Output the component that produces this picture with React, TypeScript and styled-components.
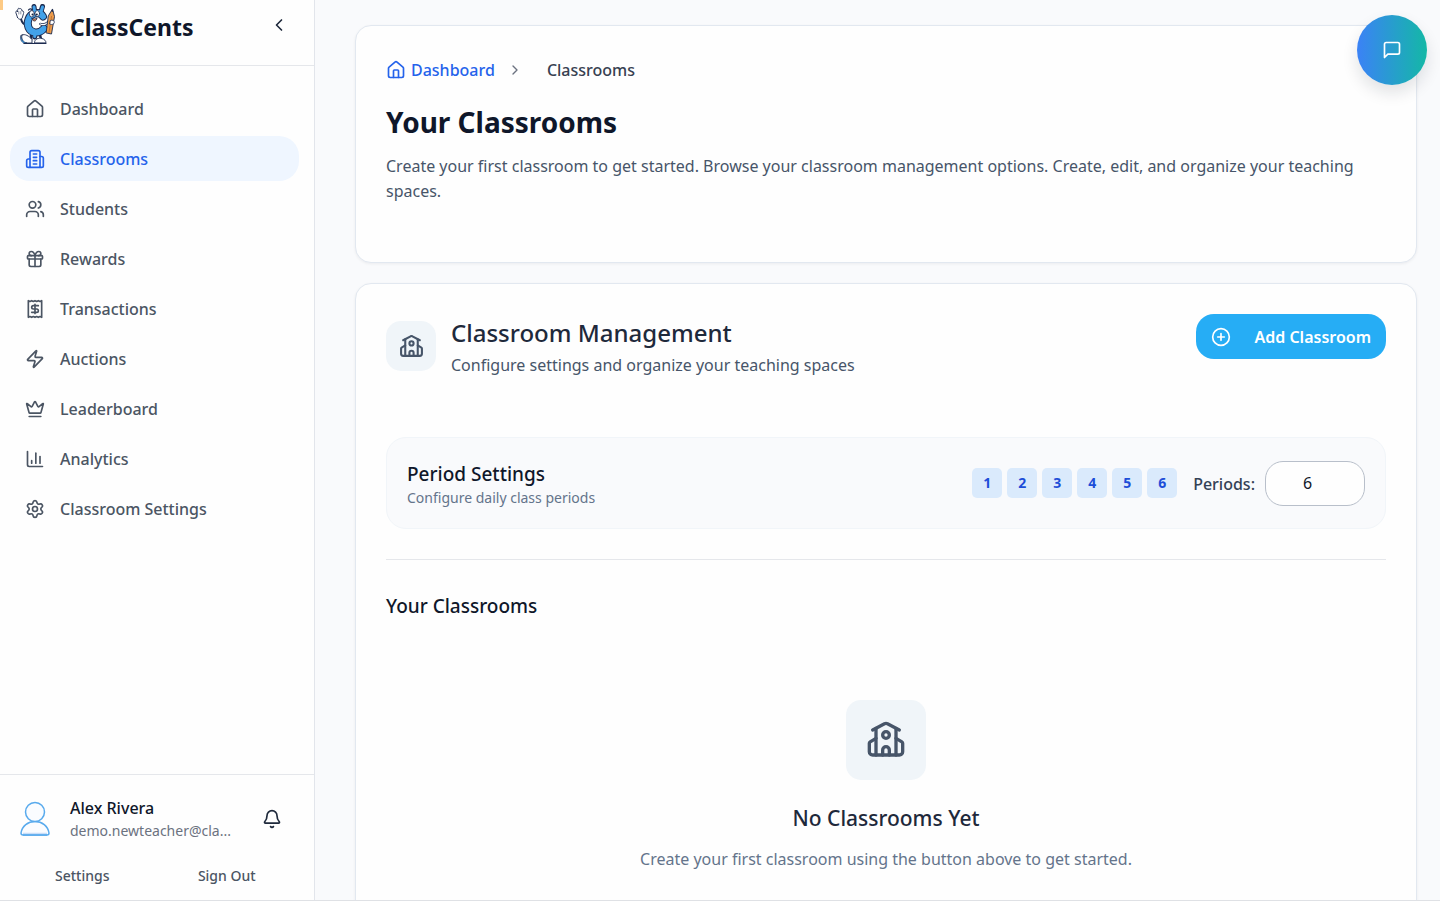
import React from "react";
import styled, { createGlobalStyle, css } from "styled-components";
import {
  Bell,
  ChartColumn,
  ChevronLeft,
  ChevronRight,
  CirclePlus,
  Crown,
  Gift,
  House,
  Receipt,
  School,
  Settings,
  Users,
  Zap,
} from "lucide-react";

const GlobalStyle = createGlobalStyle`
  *, *::before, *::after { box-sizing: border-box; }
  body {
    margin: 0;
    background: #f9fafc;
    color: #0f172a;
    font-family: "Noto Sans", "Open Sans", sans-serif;
    font-size: 16px;
    line-height: 25px;
  }
  h1, h2, h3, p, ul, ol { margin: 0; padding: 0; }
  ul, ol { list-style: none; }
  button, input { font: inherit; }
  a { text-decoration: none; }
`;

const Shell = styled.div`
  position: relative;
  display: flex;
  height: 100vh;
  overflow: hidden;
  border-bottom: 1px solid #dfe1e5;
`;

const FocusMark = styled.span`
  position: absolute;
  top: 0;
  left: 0;
  width: 3px;
  height: 10px;
  background: #fdca85;
`;

const Sidebar = styled.aside`
  display: flex;
  flex-direction: column;
  flex: 0 0 315px;
  min-width: 0;
  background: #fefefe;
  border-right: 1px solid #e2e5eb;
`;

const Brand = styled.header`
  display: flex;
  align-items: flex-start;
  height: 66px;
  padding: 4px 20px 0 15px;
  border-bottom: 1px solid #e5e7eb;
`;

const BrandName = styled.span`
  flex: 1;
  margin-left: 15px;
  font-size: 23px;
  line-height: 46px;
  font-weight: 700;
`;

const IconButton = styled.button`
  display: flex;
  align-items: center;
  justify-content: center;
  width: 30px;
  height: 42px;
  padding: 0;
  border: 0;
  background: none;
  color: #1e293b;
`;

const Nav = styled.nav`
  flex: 1;
  padding: 20px 15px 0 10px;
`;

const NavList = styled.ul`
  display: flex;
  flex-direction: column;
  gap: 5px;
`;

const NavLink = styled.a<{ $active?: boolean }>`
  display: flex;
  align-items: center;
  gap: 15px;
  height: 45px;
  padding: 0 15px;
  border-radius: 20px;
  font-weight: 500;
  color: #4b5563;
  ${(p) =>
    p.$active &&
    css`
      background: #eff6ff;
      color: #2563eb;
    `}
`;

const Label = styled.span`
  padding-top: 2px;
`;

const Account = styled.footer`
  border-top: 1px solid #e5e7eb;
  padding: 21px 15px 5px 10px;
`;

const AccountRow = styled.div`
  display: flex;
  align-items: center;
  gap: 20px;
  padding: 0 12px 0 10px;
`;

const AccountText = styled.div`
  flex: 1;
  min-width: 0;
`;

const AccountName = styled.p`
  font-size: 16px;
  line-height: 25px;
  font-weight: 500;
`;

const AccountMail = styled.p`
  font-size: 14px;
  line-height: 20px;
  color: #6b7280;
  white-space: nowrap;
`;

const AccountActions = styled.div`
  display: grid;
  grid-template-columns: 1fr 1fr;
  margin-top: 14px;
`;

const TextButton = styled.button`
  height: 40px;
  padding: 0;
  border: 0;
  background: none;
  color: #4b5563;
  font-size: 14px;
  font-weight: 500;
`;

const Main = styled.main`
  display: flex;
  flex: 1;
  flex-direction: column;
  gap: 20px;
  min-width: 0;
  padding: 25px 23px 0 40px;
`;

const Card = styled.section`
  flex-shrink: 0;
  padding: 30px;
  background: #fefefe;
  border: 1px solid #e2e8f0;
  border-radius: 16px;
  box-shadow: 0 1px 3px rgba(15, 23, 42, 0.06);
`;

const Crumbs = styled.ol`
  display: flex;
  align-items: center;
  font-weight: 500;
  color: #374151;
`;

const Crumb = styled.li`
  display: flex;
  align-items: center;
`;

const CrumbLink = styled.a`
  display: flex;
  align-items: center;
  gap: 5px;
  margin-right: 12px;
  color: #2563eb;
`;

const CrumbArrow = styled(ChevronRight)`
  margin-right: 24px;
  color: #6b7280;
`;

const PageTitle = styled.h1`
  margin-top: 18px;
  font-size: 28px;
  line-height: 42px;
  font-weight: 700;
`;

const Lead = styled.p`
  margin: 11px 0 28px;
  color: #475569;
`;

const SectionHead = styled.div`
  display: flex;
  align-items: flex-start;
  justify-content: space-between;
`;

const SectionIntro = styled.div`
  display: flex;
  align-items: center;
  gap: 15px;
`;

const IconTile = styled.div<{ $large?: boolean }>`
  display: flex;
  align-items: center;
  justify-content: center;
  width: ${(p) => (p.$large ? 80 : 50)}px;
  height: ${(p) => (p.$large ? 80 : 50)}px;
  background: #f0f5f9;
  border-radius: 15px;
  color: #475569;
`;

const SectionTitle = styled.h2`
  font-size: 24px;
  line-height: 38px;
  font-weight: 500;
  color: #1e293b;
`;

const Muted = styled.p`
  margin-top: 1px;
  color: #475569;
`;

const PrimaryButton = styled.button`
  display: flex;
  align-items: center;
  justify-content: space-between;
  width: 190px;
  height: 45px;
  padding: 0 15px;
  border: 0;
  border-radius: 18px;
  background: #26adf5;
  color: #ffffff;
  font-size: 16px;
  font-weight: 600;
`;

const PeriodPanel = styled.div`
  display: flex;
  align-items: center;
  justify-content: space-between;
  height: 92px;
  margin: 59px 0 30px;
  padding: 0 20px;
  background: #f9fafc;
  border: 1px solid #f1f5f9;
  border-radius: 20px;
`;

const PanelTitle = styled.h3`
  font-size: 19px;
  line-height: 28px;
  font-weight: 500;
`;

const PanelText = styled.div`
  padding-top: 2px;
`;

const PanelNote = styled.p`
  font-size: 14px;
  line-height: 20px;
  color: #64748b;
`;

const PeriodControls = styled.div`
  display: flex;
  align-items: center;
`;

const PeriodList = styled.ul`
  display: flex;
  gap: 5px;
`;

const PeriodChip = styled.li`
  width: 30px;
  height: 30px;
  border-radius: 5px;
  background: #daeafc;
  color: #1d4ed8;
  font-size: 14px;
  line-height: 30px;
  font-weight: 700;
  text-align: center;
`;

const PeriodLabel = styled.label`
  margin: 0 10px 0 16px;
  padding-top: 2px;
  font-weight: 500;
  color: #334155;
`;

const PeriodInput = styled.input`
  width: 100px;
  height: 45px;
  padding: 0 15px;
  border: 1px solid #b8bfca;
  border-radius: 18px;
  background: #fefefe;
  color: #0f172a;
  text-align: center;
`;

const ClassroomList = styled.div`
  border-top: 1px solid #e5e7eb;
  padding-top: 32px;
`;

const Empty = styled.div`
  display: flex;
  flex-direction: column;
  align-items: center;
  padding: 80px 0 50px;
`;

const EmptyTitle = styled.h3`
  margin: 20px 0 11px;
  font-size: 21px;
  line-height: 36px;
  font-weight: 500;
  color: #1e293b;
`;

const EmptyNote = styled.p`
  color: #64748b;
`;

const ChatButton = styled.button`
  position: absolute;
  top: 15px;
  right: 13px;
  display: flex;
  align-items: center;
  justify-content: center;
  width: 70px;
  height: 70px;
  padding: 0;
  border: 0;
  border-radius: 50%;
  background: linear-gradient(90deg, #3b82f6, #14b8a6);
  box-shadow: 0 8px 16px rgba(15, 23, 42, 0.12);
  color: #ffffff;
`;

type IconProps = { size?: number };

const Building = ({ size = 20 }: IconProps) => (
  <svg width={size} height={size} viewBox="0 0 24 24" fill="none" stroke="currentColor" strokeWidth="2" strokeLinecap="round" strokeLinejoin="round" aria-hidden="true">
    <path d="M6 22V4a2 2 0 0 1 2-2h8a2 2 0 0 1 2 2v18Z" />
    <path d="M6 12H4a2 2 0 0 0-2 2v6a2 2 0 0 0 2 2h2" />
    <path d="M18 9h2a2 2 0 0 1 2 2v9a2 2 0 0 1-2 2h-2" />
    <path d="M10 6h4M10 10h4M10 14h4M10 18h4" />
  </svg>
);

const ChatIcon = () => (
  <svg width="20" height="20" viewBox="0 0 24 24" fill="none" stroke="currentColor" strokeWidth="2" strokeLinecap="round" strokeLinejoin="round" aria-hidden="true">
    <path d="M21 15a2 2 0 0 1-2 2H7l-4 4V5a2 2 0 0 1 2-2h14a2 2 0 0 1 2 2z" />
  </svg>
);

const Mascot = () => (
  <svg width="40" height="41" viewBox="0 0 40 41" fill="none" strokeLinecap="round" strokeLinejoin="round" aria-hidden="true">
    <path d="M9 39.500h22" stroke="#1d2b4f" strokeWidth="1.200" />
    <path d="M6 15c1 4 3 6 6 6" stroke="#1d2b4f" strokeWidth="2" />
    <path d="M2.500 13.500.8 8.500C.8 6.500 2 6.500 2.500 8c0-4 1.500-4.500 2.300-3 1-1 2 0 2.200 2 1.500-.5 2 1 1.500 2.500L7.500 13c-.5 3-4 3-5 .5z" fill="#fff" stroke="#1d2b4f" strokeWidth=".9" />
    <path d="M3.800 7.500v2.500M5.800 7.500v2.500" stroke="#1d2b4f" strokeWidth=".5" />
    <path d="M16 31v5M25 31l1 4" stroke="#1d2b4f" strokeWidth="2.500" />
    <path d="M29 24.500c-5 6-13 5-15.500-1-2-5 0-12.500 6-14 4-1 7 .5 8.500 3" stroke="#1d2b4f" strokeWidth="8" />
    <path d="m19 2.500.7 5M27.500 2.500l-1.500 5M20 30l-.3 3" stroke="#1d2b4f" strokeWidth="5" />
    <path d="M29 24.500c-5 6-13 5-15.500-1-2-5 0-12.500 6-14 4-1 7 .5 8.500 3" stroke="#43a2ea" strokeWidth="6" />
    <path d="m19 3 .7 5M27.500 3l-1.500 5M20 29l-.3 3.500" stroke="#43a2ea" strokeWidth="3" />
    <path d="M13.500 6c1-1.500 2.500-1.500 3.500-.5" stroke="#1d2b4f" strokeWidth="1.300" />
    <ellipse cx="16.800" cy="9.800" rx="2.500" ry="3.200" fill="#fff" stroke="#1d2b4f" strokeWidth=".8" />
    <ellipse cx="22.300" cy="9.600" rx="2.300" ry="3" fill="#fff" stroke="#1d2b4f" strokeWidth=".8" />
    <circle cx="17.500" cy="10.500" r="1" fill="#14213d" />
    <circle cx="21.800" cy="10.500" r="1" fill="#14213d" />
    <path d="M17 14.500c2 .8 3.500.5 5-.5-.5 3.500-4 4.500-5 .5z" fill="#e2874f" stroke="#1d2b4f" strokeWidth=".8" />
    <path d="M25.500 20c2.500 1.500 5 .5 8-2" stroke="#1d2b4f" strokeWidth="2.600" />
    <path d="M25.500 20c2.500 1.500 5 .5 8-2" stroke="#fff" strokeWidth="1.200" />
    <path d="m33.500 11.500 4-6.500 2 7.500-3 17.500-5-1z" fill="#eb9b4b" stroke="#1d2b4f" strokeWidth=".9" />
    <path d="m36.200 7.500 1.300-3 .9 3.500z" fill="#1d2b4f" />
    <path d="m36.500 12.500-2.500 16" stroke="#b9682b" strokeWidth=".8" />
    <path d="M35.500 16.500c2-1 4 0 3.800 2-.3 1.800-2.300 2.500-4.300 1.700z" fill="#fff" stroke="#1d2b4f" strokeWidth=".8" />
    <path d="M7 31c3-1.500 7 1 10 4.500v3.500H9.500C7 37 6 33.500 7 31z" fill="#fff" stroke="#1d2b4f" strokeWidth=".9" />
    <path d="M6 31.500C6 35 8 38 12 39H8.500C6 37.500 4.500 34 6 31.500z" fill="#43a2ea" stroke="#1d2b4f" strokeWidth=".6" />
    <path d="M19.500 38.500c0-3.500 4-5 7.500-4 2.500.7 4 2.500 4 4z" fill="#fff" stroke="#1d2b4f" strokeWidth=".9" />
  </svg>
);

const Avatar = () => (
  <svg width="30" height="36" viewBox="0 0 30 36" fill="none" stroke="#58aaed" strokeWidth="1.500" strokeLinejoin="round" aria-hidden="true">
    <path d="M1 32c1-7 7-11.500 14-11.500S28 25 29 32c0 2-1 2-2 2H3c-1 0-2 0-2-2z" fill="#fafcff" />
    <path d="M3 32.500h24" stroke="#c9def8" />
    <path d="M3 34h24" />
    <ellipse cx="15" cy="11" rx="9.500" ry="9.500" fill="#fafcff" />
  </svg>
);

const navItems = [
  { label: "Dashboard", Icon: House },
  { label: "Classrooms", Icon: Building, active: true },
  { label: "Students", Icon: Users },
  { label: "Rewards", Icon: Gift },
  { label: "Transactions", Icon: Receipt },
  { label: "Auctions", Icon: Zap },
  { label: "Leaderboard", Icon: Crown },
  { label: "Analytics", Icon: ChartColumn },
  { label: "Classroom Settings", Icon: Settings },
];

const periods = [1, 2, 3, 4, 5, 6];

export default function App() {
  return (
    <>
      <GlobalStyle />
      <Shell>
        <Sidebar>
          <Brand>
            <Mascot />
            <BrandName>ClassCents</BrandName>
            <IconButton type="button" aria-label="Collapse sidebar">
              <ChevronLeft size={20} />
            </IconButton>
          </Brand>
          <Nav aria-label="Main">
            <NavList>
              {navItems.map(({ label, Icon, active }) => (
                <li key={label}>
                  <NavLink href="#" $active={active} aria-current={active ? "page" : undefined}>
                    <Icon size={20} />
                    <Label>{label}</Label>
                  </NavLink>
                </li>
              ))}
            </NavList>
          </Nav>
          <Account>
            <AccountRow>
              <Avatar />
              <AccountText>
                <AccountName>Alex Rivera</AccountName>
                <AccountMail>demo.newteacher@cla...</AccountMail>
              </AccountText>
              <IconButton type="button" aria-label="Notifications">
                <Bell size={20} />
              </IconButton>
            </AccountRow>
            <AccountActions>
              <TextButton type="button">Settings</TextButton>
              <TextButton type="button">Sign Out</TextButton>
            </AccountActions>
          </Account>
        </Sidebar>
        <Main>
          <Card>
            <nav aria-label="Breadcrumb">
              <Crumbs>
                <Crumb>
                  <CrumbLink href="#">
                    <House size={20} />
                    <Label>Dashboard</Label>
                  </CrumbLink>
                  <CrumbArrow size={16} />
                </Crumb>
                <Crumb aria-current="page">
                  <Label>Classrooms</Label>
                </Crumb>
              </Crumbs>
            </nav>
            <PageTitle>Your Classrooms</PageTitle>
            <Lead>
              Create your first classroom to get started. Browse your classroom management options.
              Create, edit, and organize your teaching spaces.
            </Lead>
          </Card>
          <Card>
            <SectionHead>
              <SectionIntro>
                <IconTile>
                  <School size={25} />
                </IconTile>
                <div>
                  <SectionTitle>Classroom Management</SectionTitle>
                  <Muted>Configure settings and organize your teaching spaces</Muted>
                </div>
              </SectionIntro>
              <PrimaryButton type="button">
                <CirclePlus size={20} />
                <Label>Add Classroom</Label>
              </PrimaryButton>
            </SectionHead>
            <PeriodPanel>
              <PanelText>
                <PanelTitle>Period Settings</PanelTitle>
                <PanelNote>Configure daily class periods</PanelNote>
              </PanelText>
              <PeriodControls>
                <PeriodList>
                  {periods.map((n) => (
                    <PeriodChip key={n}>{n}</PeriodChip>
                  ))}
                </PeriodList>
                <PeriodLabel htmlFor="periods">Periods:</PeriodLabel>
                <PeriodInput id="periods" type="number" min={1} max={12} defaultValue={6} />
              </PeriodControls>
            </PeriodPanel>
            <ClassroomList>
              <PanelTitle>Your Classrooms</PanelTitle>
              <Empty>
                <IconTile $large>
                  <School size={40} />
                </IconTile>
                <EmptyTitle>No Classrooms Yet</EmptyTitle>
                <EmptyNote>Create your first classroom using the button above to get started.</EmptyNote>
              </Empty>
            </ClassroomList>
          </Card>
        </Main>
        <FocusMark />
        <ChatButton type="button" aria-label="Open chat">
          <ChatIcon />
        </ChatButton>
      </Shell>
    </>
  );
}
